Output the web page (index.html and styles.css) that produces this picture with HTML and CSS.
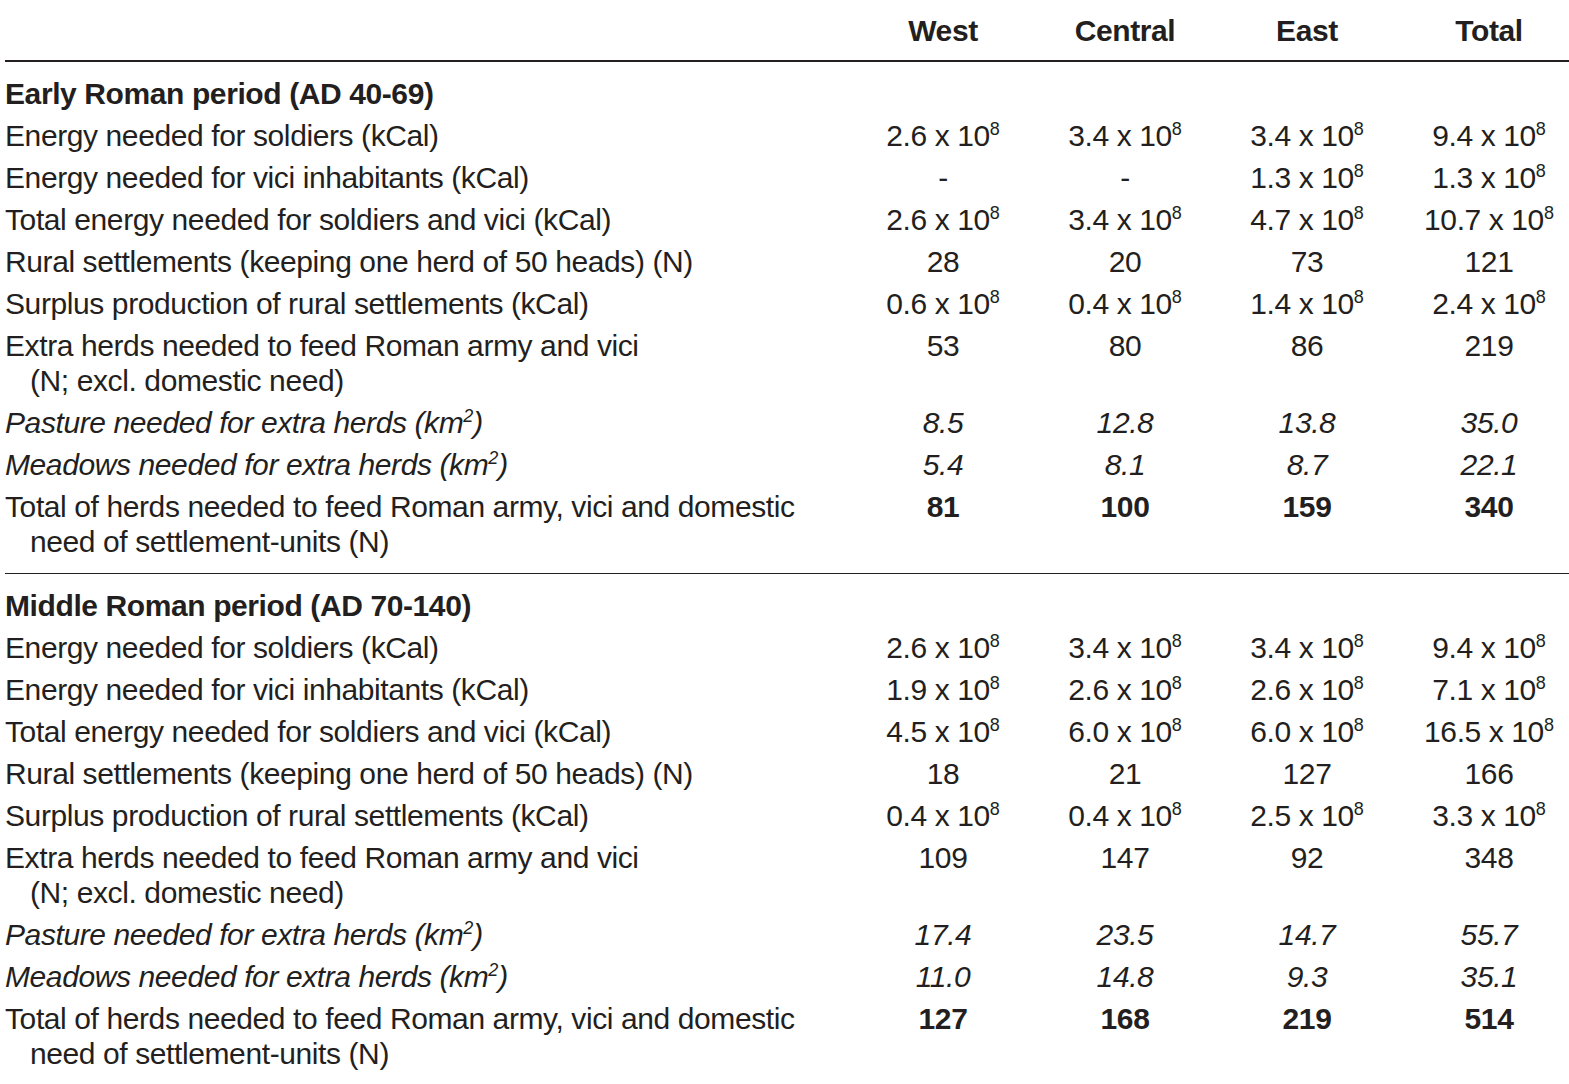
FILE: index.html
```html
<!DOCTYPE html>
<html lang="en">
<head>
<meta charset="utf-8">
<title>Energy and herd requirements</title>
<link rel="stylesheet" href="styles.css">
</head>
<body>
<table class="data">
  <colgroup>
    <col class="c-label">
    <col class="c-num">
    <col class="c-num">
    <col class="c-num">
    <col class="c-num">
  </colgroup>
  <thead>
    <tr class="head">
      <th></th><th>West</th><th>Central</th><th>East</th><th>Total</th>
    </tr>
  </thead>
  <tbody>
    <tr class="group"><td class="label" colspan="5">Early Roman period (AD 40-69)</td></tr>
    <tr><td class="label">Energy needed for soldiers (kCal)</td><td>2.6 x 10<sup>8</sup></td><td>3.4 x 10<sup>8</sup></td><td>3.4 x 10<sup>8</sup></td><td>9.4 x 10<sup>8</sup></td></tr>
    <tr><td class="label">Energy needed for vici inhabitants (kCal)</td><td>-</td><td>-</td><td>1.3 x 10<sup>8</sup></td><td>1.3 x 10<sup>8</sup></td></tr>
    <tr><td class="label">Total energy needed for soldiers and vici (kCal)</td><td>2.6 x 10<sup>8</sup></td><td>3.4 x 10<sup>8</sup></td><td>4.7 x 10<sup>8</sup></td><td>10.7 x 10<sup>8</sup></td></tr>
    <tr><td class="label">Rural settlements (keeping one herd of 50 heads) (N)</td><td>28</td><td>20</td><td>73</td><td>121</td></tr>
    <tr><td class="label">Surplus production of rural settlements (kCal)</td><td>0.6 x 10<sup>8</sup></td><td>0.4 x 10<sup>8</sup></td><td>1.4 x 10<sup>8</sup></td><td>2.4 x 10<sup>8</sup></td></tr>
    <tr><td class="label">Extra herds needed to feed Roman army and vici<br>(N; excl. domestic need)</td><td>53</td><td>80</td><td>86</td><td>219</td></tr>
    <tr class="it"><td class="label">Pasture needed for extra herds (km<sup>2</sup>)</td><td>8.5</td><td>12.8</td><td>13.8</td><td>35.0</td></tr>
    <tr class="it"><td class="label">Meadows needed for extra herds (km<sup>2</sup>)</td><td>5.4</td><td>8.1</td><td>8.7</td><td>22.1</td></tr>
    <tr class="tot end"><td class="label">Total of herds needed to feed Roman army, vici and domestic<br>need of settlement-units (N)</td><td>81</td><td>100</td><td>159</td><td>340</td></tr>
    <tr class="group"><td class="label" colspan="5">Middle Roman period (AD 70-140)</td></tr>
    <tr><td class="label">Energy needed for soldiers (kCal)</td><td>2.6 x 10<sup>8</sup></td><td>3.4 x 10<sup>8</sup></td><td>3.4 x 10<sup>8</sup></td><td>9.4 x 10<sup>8</sup></td></tr>
    <tr><td class="label">Energy needed for vici inhabitants (kCal)</td><td>1.9 x 10<sup>8</sup></td><td>2.6 x 10<sup>8</sup></td><td>2.6 x 10<sup>8</sup></td><td>7.1 x 10<sup>8</sup></td></tr>
    <tr><td class="label">Total energy needed for soldiers and vici (kCal)</td><td>4.5 x 10<sup>8</sup></td><td>6.0 x 10<sup>8</sup></td><td>6.0 x 10<sup>8</sup></td><td>16.5 x 10<sup>8</sup></td></tr>
    <tr><td class="label">Rural settlements (keeping one herd of 50 heads) (N)</td><td>18</td><td>21</td><td>127</td><td>166</td></tr>
    <tr><td class="label">Surplus production of rural settlements (kCal)</td><td>0.4 x 10<sup>8</sup></td><td>0.4 x 10<sup>8</sup></td><td>2.5 x 10<sup>8</sup></td><td>3.3 x 10<sup>8</sup></td></tr>
    <tr><td class="label">Extra herds needed to feed Roman army and vici<br>(N; excl. domestic need)</td><td>109</td><td>147</td><td>92</td><td>348</td></tr>
    <tr class="it"><td class="label">Pasture needed for extra herds (km<sup>2</sup>)</td><td>17.4</td><td>23.5</td><td>14.7</td><td>55.7</td></tr>
    <tr class="it"><td class="label">Meadows needed for extra herds (km<sup>2</sup>)</td><td>11.0</td><td>14.8</td><td>9.3</td><td>35.1</td></tr>
    <tr class="tot"><td class="label">Total of herds needed to feed Roman army, vici and domestic<br>need of settlement-units (N)</td><td>127</td><td>168</td><td>219</td><td>514</td></tr>
  </tbody>
</table>
</body>
</html>
```
FILE: styles.css
```css
html, body {
  margin: 0;
  padding: 0;
  background: #ffffff;
  overflow: hidden;
}

body {
  font-family: "Liberation Sans", Arial, sans-serif;
  font-size: 30px;
  letter-spacing: -0.4px;
  color: #231f20;
}

.data {
  border-collapse: collapse;
  margin-left: 5px;
  table-layout: fixed;
  width: 1575px;
}

.c-label { width: 847px; }
.c-num { width: 182px; }

.data th,
.data td {
  padding: 3.5px 0;
  line-height: 35px;
  text-align: center;
  vertical-align: top;
  white-space: nowrap;
}

.data th {
  font-weight: 700;
  padding-top: 13px;
  padding-bottom: 12px;
}

.head {
  border-bottom: 2px solid #231f20;
}

.data td.label {
  text-align: left;
  padding-left: 25px;
  text-indent: -25px;
}

.group td.label {
  font-weight: 700;
  padding-top: 14px;
}

.it td {
  font-style: italic;
}

.tot td {
  font-weight: 700;
}

.tot td.label {
  font-weight: 400;
}

.end {
  border-bottom: 1px solid #231f20;
}

.end td {
  padding-bottom: 14px;
}

sup {
  font-size: 0.6em;
  line-height: 0;
  vertical-align: 0.6em;
  letter-spacing: 0;
}
```
